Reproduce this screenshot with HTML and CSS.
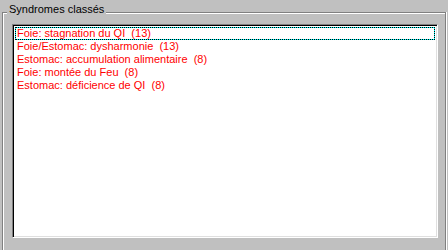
FILE: index.html
```html
<!DOCTYPE html>
<html lang="fr">
<head>
    <meta charset="UTF-8">
    <title>Syndromes classés</title>
    <link rel="stylesheet" href="styles.css">
</head>
<body>

    <!-- GROUP BOX -->
    <div class="group">
        <span class="group-title">Syndromes classés</span>

        <!-- LIST BOX -->
        <ul class="listbox">
            <li class="item focused">Foie: stagnation du QI  (13)</li>
            <li class="item">Foie/Estomac: dysharmonie  (13)</li>
            <li class="item">Estomac: accumulation alimentaire  (8)</li>
            <li class="item">Foie: montée du Feu  (8)</li>
            <li class="item">Estomac: déficience de QI  (8)</li>
        </ul>
    </div>

</body>
</html>
```

FILE: styles.css
```css
* { margin: 0; padding: 0; box-sizing: border-box; }

body {
    background: #c0c0c0;
    font-family: "Liberation Sans", Arial, sans-serif;
    font-size: 11px;
    color: #000;
    width: 448px;
    height: 250px;
    overflow: hidden;
}

/* etched group frame, bottom edge is cut off by the window */
.group {
    position: relative;
    margin: 12px 0 0 2px;
    width: 444px;
    height: 238px;
    padding: 11px 7px 0 9px;
    border: 1px solid #808080;
    border-bottom: 0;
    box-shadow: inset 1px 1px #fff, 1px 0 #fff;
}

.group-title {
    position: absolute;
    top: -10px;
    left: 4px;
    padding: 0 2px;
    line-height: 13px;
    background: #c0c0c0;
}

/* sunken list box */
.listbox {
    list-style: none;
    width: 426px;
    height: 214px;
    padding: 2px 2px 0 2px;
    background: #fff;
    border: 1px solid;
    border-color: #808080 #fff #fff #808080;
    box-shadow: inset 1px 1px #000, inset -1px -1px #dfdfdf;
}

.item {
    height: 13px;
    line-height: 13px;
    padding-left: 2px;
    color: #f00;
    white-space: pre;
}

.focused {
    box-shadow: inset 0 0 0 1px #0ff;
    outline: 1px dotted #000;
    outline-offset: -1px;
}
```
